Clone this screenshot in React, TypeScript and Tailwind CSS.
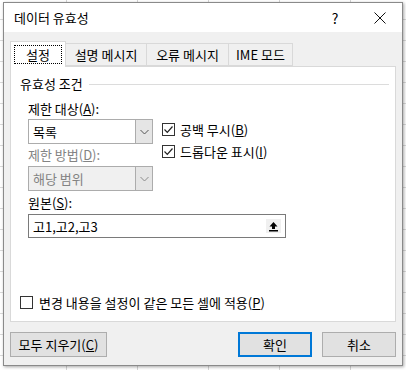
import React from "react";

const font = { fontFamily: '"Noto Sans CJK KR", "Noto Sans", sans-serif' };

function Check({ checked }: { checked: boolean }) {
  return (
    <div className="w-[13px] h-[13px] border border-[#333333] bg-white flex items-center justify-center shrink-0">
      {checked && (
        <svg width="11" height="11" viewBox="0 0 11 11">
          <path d="M1.5 5.5 L4.3 8.3 L9.5 2.5" fill="none" stroke="#222" strokeWidth="1.2" />
        </svg>
      )}
    </div>
  );
}

function Chevron({ color }: { color: string }) {
  return (
    <svg width="9" height="6" viewBox="0 0 9 6">
      <path d="M0.5 1 L4.5 5 L8.5 1" fill="none" stroke={color} strokeWidth="1" />
    </svg>
  );
}

function Select({ value, disabled }: { value: string; disabled?: boolean }) {
  return (
    <div
      className={`w-[125px] h-[25px] flex border border-[#acacac] ${disabled ? "bg-[#f0f0f0]" : "bg-white"}`}
    >
      <div className={`flex-1 flex items-center pl-[4px] ${disabled ? "text-[#838383]" : "text-black"}`}>{value}</div>
      <div className="w-[17px] flex items-center justify-center bg-[#e5e5e5] border-l border-[#acacac]">
        <Chevron color={disabled ? "#8a8a8a" : "#555"} />
      </div>
    </div>
  );
}

export default function App() {
  return (
    <div
      className="w-[406px] h-[370px] bg-white pl-[3px] pt-[2px] bg-[linear-gradient(90deg,transparent_70px,#d4d4d4_70px,#d4d4d4_71px,transparent_71px),linear-gradient(180deg,transparent_20px,#dadada_20px,#dadada_21px,transparent_21px)] bg-[length:71px_21px] bg-[position:-4px_-1px]"
      style={font}
    >
      <div className="w-[400px] h-[364px] border border-[#8a8a8a] bg-[#f0f0f0] flex flex-col text-[13px] leading-none text-black shadow-[1px_1px_3px_rgba(0,0,0,0.35)]">
        {/* Title bar */}
        <div className="h-[29px] bg-white flex items-center shrink-0">
          <div className="pl-[10px] flex-1">데이터 유효성</div>
          <div className="w-[20px] text-center text-[14px] mr-[28px]">?</div>
          <div className="w-[14px] mr-[15px] flex items-center justify-center">
            <svg width="12" height="12" viewBox="0 0 12 12">
              <path d="M0.5 0.5 L11.5 11.5 M11.5 0.5 L0.5 11.5" stroke="#111" strokeWidth="1" />
            </svg>
          </div>
        </div>

        {/* Body */}
        <div className="flex-1 flex flex-col px-[6px] pt-[9px]">
          {/* Tabs */}
          <div className="flex items-end h-[25px] relative z-10">
            <div className="w-[56px] h-[26px] bg-white border border-[#d9d9d9] border-b-0 flex items-center justify-center mb-[-1px]">
              <div className="border border-dotted border-black px-[11px] h-[19px] flex items-center">설정</div>
            </div>
            <div className="w-[81px] h-[23px] border border-[#d9d9d9] border-l-0 flex items-center justify-center">설명 메시지</div>
            <div className="w-[82px] h-[23px] border border-[#d9d9d9] border-l-0 flex items-center justify-center">오류 메시지</div>
            <div className="w-[64px] h-[23px] border border-[#d9d9d9] border-l-0 flex items-center justify-center">IME 모드</div>
          </div>

          {/* Panel */}
          <div className="h-[256px] bg-white border border-[#d9d9d9] flex flex-col pl-[9px] pr-[6px] pt-[10px]">
            <div className="flex items-center gap-[6px]">
              <span>유효성 조건</span>
              <div className="flex-1 h-px bg-[#dcdcdc] mt-[1px]"></div>
            </div>
            <div className="pl-[8px] pt-[12px] flex flex-col">
              <div>
                제한 대상(<span className="underline">A</span>):
              </div>
              <div className="flex mt-[4px] items-start">
                <div className="flex flex-col">
                  <Select value="목록" />
                  <div className="text-[#838383] mt-[4px]">
                    제한 방법(<span className="underline">D</span>):
                  </div>
                  <div className="mt-[5px]">
                    <Select value="해당 범위" disabled />
                  </div>
                </div>
                <div className="ml-[9px] flex flex-col gap-[9px] pt-[4px]">
                  <div className="flex items-center gap-[5px]">
                    <Check checked />
                    <span>
                      공백 무시(<span className="underline">B</span>)
                    </span>
                  </div>
                  <div className="flex items-center gap-[5px]">
                    <Check checked />
                    <span>
                      드롭다운 표시(<span className="underline">I</span>)
                    </span>
                  </div>
                </div>
              </div>
              <div className="mt-[5px]">
                원본(<span className="underline">S</span>):
              </div>
              <div className="mt-[5px] w-[258px] h-[24px] border border-[#7a7a7a] bg-white flex items-center pl-[4px] pr-[3px]">
                <span className="flex-1">고1,고2,고3</span>
                <div className="w-[17px] h-[16px] bg-[#f0f0f0] border border-white flex items-center justify-center">
                  <svg width="11" height="11" viewBox="0 0 11 11">
                    <path d="M5.5 1 L9.5 5.5 L7 5.5 L7 8 L4 8 L4 5.5 L1.5 5.5 Z" fill="#000" />
                    <rect x="1" y="9" width="9" height="1.5" fill="#000" />
                  </svg>
                </div>
              </div>
            </div>
            <div className="flex-1"></div>
            <div className="flex items-center gap-[6px] pb-[12px]">
              <Check checked={false} />
              <span>
                변경 내용을 설정이 같은 모든 셀에 적용(<span className="underline">P</span>)
              </span>
            </div>
          </div>

          {/* Buttons */}
          <div className="flex mt-[10px]">
            <div className="w-[97px] h-[25px] bg-[#e1e1e1] border border-[#adadad] flex items-center justify-center">
              모두 지우기(<span className="underline">C</span>)
            </div>
            <div className="flex-1"></div>
            <div className="w-[74px] h-[25px] bg-[#e1e1e1] border-2 border-[#0078d7] flex items-center justify-center">확인</div>
            <div className="w-[74px] h-[25px] ml-[10px] bg-[#e1e1e1] border border-[#adadad] flex items-center justify-center">취소</div>
          </div>
        </div>
      </div>
    </div>
  );
}
